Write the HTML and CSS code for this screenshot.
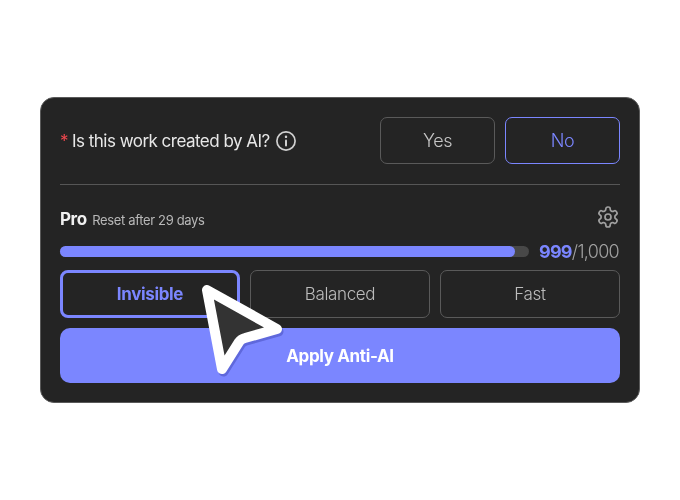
FILE: index.html
```html
<!DOCTYPE html>
<html lang="en">
<head>
<meta charset="utf-8">
<title>Anti-AI</title>
<link rel="stylesheet" href="styles.css">
</head>
<body>
<main class="card">
  <section class="question">
    <div class="label">
      <span class="star">*</span>
      <span>Is this work created by AI?</span>
      <svg class="info" width="22" height="22" viewBox="0 0 22 22" fill="none" stroke="#d0d0d0" stroke-width="1.7" stroke-linecap="round"><circle cx="11" cy="11" r="9.1"/><path d="M11 10.4v5" stroke-width="2"/><path d="M11 6.8v.1" stroke-width="2.4"/></svg>
    </div>
    <div class="choices">
      <button class="choice">Yes</button>
      <button class="choice choice-on">No</button>
    </div>
  </section>
  <hr class="rule">
  <section class="plan">
    <div class="plan-head">
      <div class="plan-title"><strong class="plan-name">Pro</strong> <span class="plan-note">Reset after 29 days</span></div>
      <svg class="gear" width="24" height="24" viewBox="0 0 24 24" fill="none" stroke="#a0a0a0" stroke-width="1.7" stroke-linecap="round" stroke-linejoin="round"><path d="M12.22 2h-.44a2 2 0 0 0-2 2v.18a2 2 0 0 1-1 1.73l-.43.25a2 2 0 0 1-2 0l-.15-.08a2 2 0 0 0-2.73.73l-.22.38a2 2 0 0 0 .73 2.73l.15.1a2 2 0 0 1 1 1.72v.51a2 2 0 0 1-1 1.74l-.15.09a2 2 0 0 0-.73 2.73l.22.38a2 2 0 0 0 2.73.73l.15-.08a2 2 0 0 1 2 0l.43.25a2 2 0 0 1 1 1.73V20a2 2 0 0 0 2 2h.44a2 2 0 0 0 2-2v-.18a2 2 0 0 1 1-1.73l.43-.25a2 2 0 0 1 2 0l.15.08a2 2 0 0 0 2.73-.73l.22-.39a2 2 0 0 0-.73-2.73l-.15-.08a2 2 0 0 1-1-1.74v-.5a2 2 0 0 1 1-1.74l.15-.09a2 2 0 0 0 .73-2.73l-.22-.38a2 2 0 0 0-2.73-.73l-.15.08a2 2 0 0 1-2 0l-.43-.25a2 2 0 0 1-1-1.73V4a2 2 0 0 0-2-2z"/><circle cx="12" cy="12" r="3"/></svg>
    </div>
    <div class="usage">
      <div class="track"><div class="fill"></div></div>
      <div class="count"><b>999</b>/1,000</div>
    </div>
    <div class="modes">
      <button class="mode mode-on">Invisible</button>
      <button class="mode">Balanced</button>
      <button class="mode">Fast</button>
    </div>
    <button class="apply">Apply Anti-AI</button>
  </section>
  <svg class="pointer" width="96" height="106" viewBox="0 0 96 106" fill="none">
    <path class="pointer-shadow" d="M12 9 L82 48 L50 57 Q46 58 44 61 L27 88 Z" transform="translate(1.5 2.5)" stroke-width="10" stroke-linejoin="round"/>
    <path d="M12 9 L82 48 L50 57 Q46 58 44 61 L27 88 Z" fill="#333333" stroke="#ffffff" stroke-width="10" stroke-linejoin="round"/>
  </svg>
</main>
</body>
</html>
```
FILE: styles.css
```css
* { box-sizing: border-box; }
html, body { height: 100%; }
body {
  margin: 0;
  background: #fff;
  display: flex;
  align-items: flex-start;
  justify-content: center;
  font-family: Inter, "Liberation Sans", sans-serif;
}
.card {
  position: relative;
  width: 600px;
  height: 306px;
  margin-top: 97px;
  padding: 19px 19px 19px;
  background: #242424;
  border: 1px solid #5a5a5a;
  border-radius: 14px;
}
.question {
  display: flex;
  justify-content: space-between;
  align-items: center;
  height: 47px;
}
.label {
  display: flex;
  align-items: center;
  color: #e8e8e8;
  font-size: 17px;
  letter-spacing: -0.52px;
  line-height: 22px;
}
.star { color: #f0484e; margin: 0 4px 0 0; }
.info { margin-left: 5px; }
.choices { display: flex; gap: 10px; }
button {
  font-family: inherit;
  background: transparent;
  cursor: pointer;
}
.choice {
  width: 115px;
  height: 47px;
  border: 1px solid #5a5a5a;
  border-radius: 7px;
  color: #c6c6c6;
  font-size: 18px;
  font-weight: 300;
  letter-spacing: -0.4px;
}
.choice-on { border-color: #7b86ff; color: #7b86ff; }
.rule {
  margin: 20px 0 0;
  border: 0;
  height: 1px;
  background: #565656;
}
.plan { padding-top: 21px; }
.plan-head {
  display: flex;
  justify-content: space-between;
  align-items: center;
  height: 22px;
}
.plan-title { padding-top: 3px; }
.plan-name { color: #f0f0f0; font-size: 17px; font-weight: 700; letter-spacing: -0.4px; }
.plan-note { color: #b8b8b8; font-size: 13px; letter-spacing: -0.35px; margin-left: 1px; }
.usage {
  display: flex;
  align-items: center;
  justify-content: space-between;
  margin-top: 13px;
  height: 20px;
}
.track {
  width: 469px;
  height: 11px;
  border-radius: 6px;
  background: #484848;
}
.fill {
  width: 455px;
  height: 100%;
  border-radius: 6px;
  background: #7b86ff;
}
.count { color: #a0a0a0; font-size: 18px; font-weight: 300; letter-spacing: -0.7px; margin-right: 1px; }
.count b { color: #7b86ff; font-weight: 700; }
.modes {
  display: grid;
  grid-template-columns: repeat(3, 1fr);
  gap: 10px;
  margin-top: 9px;
}
.mode {
  height: 48px;
  border: 1px solid #5a5a5a;
  border-radius: 7px;
  color: #bcbcbc;
  font-size: 17px;
  font-weight: 300;
  letter-spacing: -0.35px;
}
.mode-on {
  border: 3px solid #7b86ff;
  border-radius: 8px;
  color: #7b86ff;
  font-weight: 700;
}
.apply {
  display: block;
  width: 100%;
  height: 55px;
  margin-top: 10px;
  border: 0;
  border-radius: 10px;
  background: #7b86ff;
  color: #fff;
  font-size: 17px;
  font-weight: 700;
  letter-spacing: -0.35px;
}
.pointer {
  position: absolute;
  left: 154px;
  top: 183px;
}
.pointer-shadow {
  stroke: #c4c6dc;
  mix-blend-mode: multiply;
}
```
